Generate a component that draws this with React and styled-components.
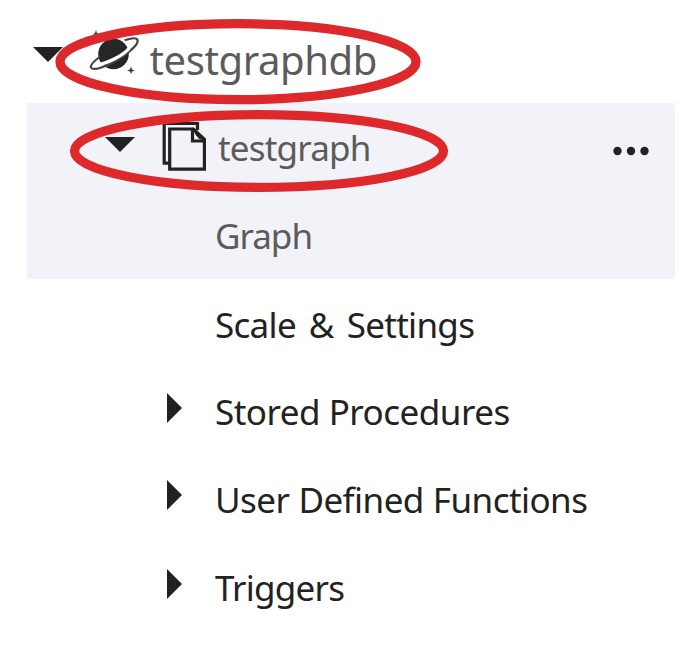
import React from "react";
import styled, { createGlobalStyle } from "styled-components";

const Global = createGlobalStyle`
  body { margin: 0; background: #fff; }
`;

const Tree = styled.main`
  position: relative;
  box-sizing: border-box;
  width: 700px;
  height: 661px;
  padding: 15px 25px 0 27px;
  overflow: hidden;
  background: #fff;
  font-family: "Noto Sans", "Open Sans", sans-serif;
`;

const Group = styled.section`
  background: ${(p) => (p.$active ? "#f2f3f8" : "transparent")};
`;

const Row = styled.div`
  display: flex;
  align-items: flex-start;
  height: 88px;
  padding-left: ${(p) => p.$indent}px;
`;

const Arrow = styled.svg`
  flex: none;
  display: block;
  width: ${(p) => p.$w}px;
  height: ${(p) => p.$h}px;
  margin-top: ${(p) => p.$top}px;
  fill: #222;
`;

const Icon = styled.svg`
  flex: none;
  display: block;
  margin: ${(p) => p.$top}px 0 0 ${(p) => p.$left}px;
`;

const Label = styled.span`
  display: block;
  white-space: pre;
  margin-left: ${(p) => p.$left || 0}px;
  margin-top: ${(p) => p.$top ?? 1}px;
  font-size: ${(p) => p.$size || 35}px;
  line-height: 88px;
  letter-spacing: ${(p) => p.$track || 0}px;
  word-spacing: ${(p) => p.$gap || 0}px;
  color: ${(p) => (p.$muted ? "#5b5b5b" : "#222")};
`;

const More = styled.svg`
  display: block;
  margin: 43px 26px 0 auto;
  fill: #222;
`;

const Marks = styled.svg`
  position: absolute;
  inset: 0;
  pointer-events: none;
`;

const Down = ({ top }) => (
  <Arrow viewBox="0 0 30 15" $w={30} $h={15} $top={top}><path d="M0 0H30L15 15Z" /></Arrow>
);

const Right = ({ top }) => (
  <Arrow viewBox="0 0 15 30" $w={15} $h={30} $top={top}><path d="M0 0L15 15L0 30Z" /></Arrow>
);

const Planet = () => (
  <Icon width="50" height="44" viewBox="0 0 50 44" $top={15} $left={26}>
    <circle cx="24.5" cy="24" r="15.3" fill="#262626" />
    <path d="M10.5 27C4 32 1 35.500 2 37.500C4 41 17 37 28 30C40 23 50 14 48.500 10C47.500 7.500 43 8 36.500 10" fill="none" stroke="#444" strokeWidth="2.200" strokeLinecap="round" />
    <path d="M10 34.500C19 33 34 25.500 40 18.500" fill="none" stroke="#fff" strokeWidth="3.400" />
    <path d="M42 36.500L43.200 39.500L46 40.500L43.200 41.500L42 44L40.800 41.500L38 40.500L40.800 39.500ZM7 0L8 3L10 4L8 5L7 8L6 5L4 4L6 3Z" fill="#444" />
  </Icon>
);

const Documents = () => (
  <Icon width="46" height="52" viewBox="0 0 46 52" $top={18} $left={26}>
    <g fill="none" stroke="#222" strokeWidth="3.200">
      <path d="M9 42.200H3.200V2.500H36.500V9" />
      <path d="M8.700 8H32.500L43.400 18.500V48.200H8.700Z" fill="#f2f3f8" />
      <path d="M31.500 7V20H43.500" />
    </g>
    <path d="M31 6L45 18L44 20L36 17Z" fill="#222" />
    <path d="M34 13.500L38 17.500H34Z" fill="#fff" />
  </Icon>
);

export default function App() {
  return (
    <Tree>
      <Global />
      <Row $indent={6}>
        <Down top={32} />
        <Planet />
        <Label $left={10.5} $top={1} $size={40} $track={-0.4} $muted>testgraphdb</Label>
      </Row>
      <Group $active>
        <Row $indent={78}>
          <Down top={34} />
          <Documents />
          <Label $left={11} $top={1} $track={-0.8} $muted>testgraph</Label>
          <More width="36" height="10" viewBox="0 0 36 10">
            <circle cx="4.500" cy="5" r="4.200" />
            <circle cx="18" cy="5" r="4.200" />
            <circle cx="31.500" cy="5" r="4.200" />
          </More>
        </Row>
        <Row $indent={188}><Label $track={-1} $muted>Graph</Label></Row>
      </Group>
      <Row $indent={188}><Label $top={2} $track={-0.7} $gap={4.5}>Scale &amp; Settings</Label></Row>
      <Row $indent={140}><Right top={26} /><Label $left={33} $track={-0.5}>Stored Procedures</Label></Row>
      <Row $indent={140}><Right top={25} /><Label $left={33} $track={-0.55} $gap={0.5}>User Defined Functions</Label></Row>
      <Row $indent={140}><Right top={26} /><Label $left={33} $track={-0.75}>Triggers</Label></Row>
      <Marks width="700" height="661" viewBox="0 0 700 661" fill="none" stroke="#de292c" strokeWidth="9.300">
        <ellipse cx="238" cy="61.700" rx="178" ry="38" />
        <ellipse cx="259" cy="151" rx="184.500" ry="36.400" />
      </Marks>
    </Tree>
  );
}
